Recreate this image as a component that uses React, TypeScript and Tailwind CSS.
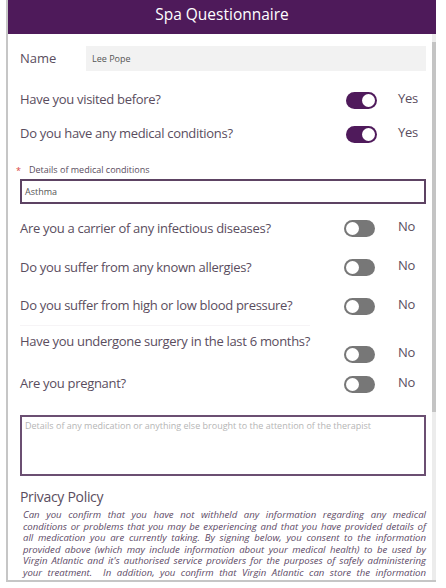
const QUESTIONS_TOP = [
  { label: "Have you visited before?", on: true },
  { label: "Do you have any medical conditions?", on: true },
];

const QUESTIONS_BOTTOM = [
  { label: "Are you a carrier of any infectious diseases?", h: "h-[39px]" },
  { label: "Do you suffer from any known allergies?", h: "h-[39px]" },
  { label: "Do you suffer from high or low blood pressure?", h: "h-[38px]" },
];

const POLICY = [
  "Can you confirm that you have not withheld any information regarding any medical",
  "conditions or problems that you may be experiencing and that you have provided details of",
  "all medication you are currently taking. By signing below, you consent to the information",
  "provided above (which may include information about your medical health) to be used by",
  "Virgin Atlantic and it's authorised service providers for the purposes of safely administering",
  "your treatment.  In addition, you confirm that Virgin Atlantic can store the information",
];

function Toggle({ on }: { on: boolean }) {
  return (
    <div
      className={`w-[31px] h-[17px] rounded-full flex items-center px-[2px] ${
        on ? "bg-[#4f1a5b] justify-end" : "bg-[#777] justify-start"
      }`}
    >
      <div className="w-[13px] h-[13px] rounded-full bg-white" />
    </div>
  );
}

function Row({ label, on, h }: { label: string; on: boolean; h: string }) {
  return (
    <div className={`flex items-center ${h}`}>
      <div className="flex-1 text-[13px] tracking-[-0.3px] text-[#5a4d5e]">{label}</div>
      <div className={on ? "w-[31px] mr-[21px]" : "w-[31px] mr-[23px]"}>
        <Toggle on={on} />
      </div>
      <div className="w-[28px] text-[13px] tracking-[-0.3px] text-[#5a4d5e] -mt-[3px]">{on ? "Yes" : "No"}</div>
    </div>
  );
}

export default function App() {
  return (
    <div className="w-[446px] h-[588px] bg-white overflow-hidden" style={{ fontFamily: '"Open Sans", "Liberation Sans", sans-serif' }}>
      <div className="ml-[6px] w-[430px] h-[582px] border-l-2 border-b-2 border-[#c6c6c6] flex flex-col overflow-hidden">
        <div className="h-[34px] bg-[#4e1a5a] flex items-center justify-center pb-[4px] text-white text-[15.5px] shrink-0">
          Spa Questionnaire
        </div>
        <div className="flex flex-1 min-h-0">
          <div className="flex-1 pl-[12px] pr-[6px] overflow-hidden">
            <div className="flex items-center mt-[12px] h-[25px]">
              <div className="w-[66px] text-[13px] text-[#5a4d5e]">Name</div>
              <div className="flex-1 h-[25px] bg-[#f2f2f2] flex items-center pl-[6px] text-[9px] text-[#555]">
                Lee Pope
              </div>
            </div>

            <div className="mt-[12px]">
              {QUESTIONS_TOP.map((q) => (
                <Row key={q.label} label={q.label} on={q.on} h="h-[34px]" />
              ))}
            </div>

            <div className="relative mt-[13px] pl-[9px] text-[9px] text-[#5a4d5e] h-[12px] leading-[12px]">
              <span className="absolute left-[-4px] top-[1px] text-[#d9453c]">*</span>
              Details of medical conditions
            </div>
            <div className="mt-[3px] h-[25px] border-2 border-[#5d4363] flex items-center pl-[3px] text-[9px] text-[#555]">
              Asthma
            </div>

            <div className="mt-[5px]">
              {QUESTIONS_BOTTOM.map((q) => (
                <Row key={q.label} label={q.label} on={false} h={q.h} />
              ))}
            </div>
            <div className="w-[290px] border-t border-[#f6f4f6]" />

            <div className="flex h-[39px] items-start pt-[6px]">
              <div className="flex-1 text-[13px] tracking-[-0.3px] text-[#5a4d5e]">Have you undergone surgery in the last 6 months?</div>
              <div className="w-[31px] mr-[23px] mt-[14px]">
                <Toggle on={false} />
              </div>
              <div className="w-[28px] text-[13px] tracking-[-0.3px] text-[#5a4d5e] mt-[11px]">No</div>
            </div>
            <Row label="Are you pregnant?" on={false} h="h-[38px]" />

            <div className="mt-[12px] h-[61px] border-2 border-[#6b4f72] pl-[3px] pt-[2px] text-[9px] text-[#b5b5b5]">
              Details of any medication or anything else brought to the attention of the therapist
            </div>

            <div className="mt-[12px] text-[14px] tracking-[-0.3px] text-[#5a4d5e] leading-[18px]">Privacy Policy</div>
            <div className="pl-[3px] mt-[3px] text-[9.6px] leading-[11.5px] italic text-[#5d4a66]">
              {POLICY.map((line) => (
                <div key={line} className="text-justify whitespace-pre [text-align-last:justify]">
                  {line}
                </div>
              ))}
            </div>
          </div>
          <div className="w-[4px] bg-[#ececec] flex flex-col">
            <div className="h-[8px]" />
            <div className="h-[370px] bg-[#c4c4c4]" />
          </div>
        </div>
      </div>
    </div>
  );
}
